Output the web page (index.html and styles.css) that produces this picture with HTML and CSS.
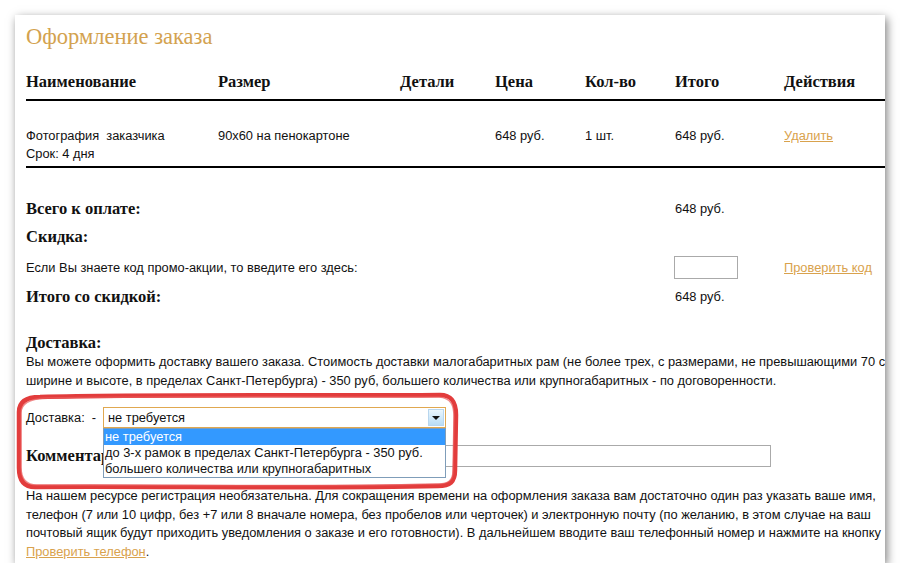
FILE: index.html
```html
<!DOCTYPE html>
<html lang="ru">
<head>
    <meta charset="UTF-8">
    <title>Оформление заказа</title>
    <link rel="stylesheet" href="styles.css">
</head>
<body>

    <div class="card">
        <h1 class="title">Оформление заказа</h1>

        <div class="order-grid order-head">
            <div>Наименование</div>
            <div>Размер</div>
            <div>Детали</div>
            <div>Цена</div>
            <div>Кол-во</div>
            <div>Итого</div>
            <div>Действия</div>
        </div>

        <div class="order-grid order-row">
            <div>Фотография&nbsp; заказчика<br>Срок: 4 дня</div>
            <div>90x60 на пенокартоне</div>
            <div></div>
            <div>648 руб.</div>
            <div>1 шт.</div>
            <div>648 руб.</div>
            <div><a href="#">Удалить</a></div>
        </div>

        <div class="order-grid sum-row sum-total">
            <div class="sum-label">Всего к оплате:</div>
            <div class="sum-value">648 руб.</div>
        </div>

        <div class="sum-row sum-gap">
            <div class="sum-label">Скидка:</div>
        </div>

        <div class="order-grid sum-row promo-row sum-gap">
            <div class="promo-text">Если Вы знаете код промо-акции, то введите его здесь:</div>
            <div><input class="promo-input" type="text"></div>
            <div><a href="#">Проверить код</a></div>
        </div>

        <div class="order-grid sum-row sum-final">
            <div class="sum-label">Итого со скидкой:</div>
            <div class="sum-value">648 руб.</div>
        </div>

        <h2 class="section-title">Доставка:</h2>
        <p class="text delivery-text">Вы можете оформить доставку вашего заказа. Стоимость доставки малогабаритных рам (не более трех, с размерами, не превышающими 70 см по<br>ширине и высоте, в пределах Санкт-Петербурга) - 350 руб, большего количества или крупногабаритных - по договоренности.</p>

        <div class="delivery-row">
            <span class="delivery-label">Доставка:&nbsp; -</span>
            <div class="select">
                <div class="select-box">
                    <span class="select-value">не требуется</span>
                    <span class="select-arrow"></span>
                </div>
                <ul class="select-list">
                    <li class="is-active">не требуется</li>
                    <li>до 3-х рамок в пределах Санкт-Петербурга - 350 руб.</li>
                    <li>большего количества или крупногабаритных</li>
                </ul>
            </div>
        </div>

        <div class="comment-row">
            <span class="comment-label">Комментарий:</span>
            <input class="comment-input" type="text">
        </div>

        <p class="text note">На нашем ресурсе регистрация необязательна. Для сокращения времени на оформления заказа вам достаточно один раз указать ваше имя,<br>телефон (7 или 10 цифр, без +7 или 8 вначале номера, без пробелов или черточек) и электронную почту (по желанию, в этом случае на ваш<br>почтовый ящик будут приходить уведомления о заказе и его готовности). В дальнейшем вводите ваш телефонный номер и нажмите на кнопку<br><a href="#">Проверить телефон</a>.</p>

        <svg class="marker" width="870" height="548" viewBox="0 0 870 548">
            <path d="M25 382 C135 379 315 381 425 380 C437 380 441 387 441 400 L440 455 C440 467 435 471 423 471 C305 474 135 471 20 472 C9 472 4 465 4 453 L4 397 C4 387 11 382 25 382 Z" fill="none" stroke="#e23c3c" stroke-width="4.5" stroke-linejoin="round"/>
            <path d="M30 383 C140 381 320 382 424 382 C436 383 439 390 439 402 L438 456 C438 466 433 469 421 469 C300 472 140 470 22 470 C11 470 6 463 6 452 L6 398 C6 389 13 384 30 383" fill="none" stroke="#ea5a5a" stroke-width="1.5" opacity="0.7"/>
        </svg>
    </div>

</body>
</html>
```

FILE: styles.css
```css
body {
    margin: 0;
    background: #fff;
    font-family: "Liberation Sans", Arial, sans-serif;
    font-size: 12.85px;
    color: #111;
}

a {
    color: #d9a24d;
}

.card {
    position: relative;
    width: 870px;
    height: 548px;
    margin: 15px 0 0 15px;
    padding: 10px 0 0 11px;
    box-sizing: border-box;
    overflow: hidden;
    background: #fff;
    box-shadow: 2px 3px 9px rgba(0, 0, 0, 0.5);
}

.title {
    margin: 0;
    font: normal 22.5px/24px "Liberation Serif", "Times New Roman", serif;
    color: #d3a24f;
}

.order-grid {
    display: grid;
    grid-template-columns: 192px 182px 95px 90px 90px 109px 1fr;
}

.order-head {
    margin-top: 24px;
    padding-bottom: 8px;
    border-bottom: 2px solid #000;
    font: bold 16.5px/18px "Liberation Serif", "Times New Roman", serif;
}

.order-row {
    padding: 26px 0 3px;
    border-bottom: 2px solid #000;
    line-height: 18px;
}

.sum-row {
    line-height: 18px;
}

.sum-label {
    grid-column: 1 / 6;
    font: bold 16.5px/18px "Liberation Serif", "Times New Roman", serif;
}

.sum-value {
    grid-column: 6;
}

.sum-total {
    margin-top: 32px;
}

.sum-gap {
    margin-top: 10px;
}

.sum-final {
    margin-top: 9px;
}

.promo-row {
    height: 23px;
    align-items: center;
}

.promo-text {
    grid-column: 1 / 6;
}

.promo-input {
    display: block;
    width: 64px;
    height: 23px;
    margin: 0 0 0 -1px;
    padding: 0;
    box-sizing: border-box;
    border: 1px solid #aaa;
}

.section-title {
    margin: 28px 0 0;
    font: bold 16.5px/18px "Liberation Serif", "Times New Roman", serif;
}

.text {
    margin: 0;
    line-height: 18.5px;
    white-space: nowrap;
}

.delivery-text {
    margin-top: 1px;
}

.delivery-row {
    display: flex;
    align-items: center;
    margin-top: 17px;
    height: 21px;
}

.delivery-label {
    width: 77px;
}

.select {
    position: relative;
    width: 343px;
}

.select-box {
    display: flex;
    align-items: center;
    height: 21px;
    box-sizing: border-box;
    border: 1px solid #e0a850;
    padding-left: 4px;
}

.select-value {
    flex: 1;
}

.select-arrow {
    position: relative;
    width: 16px;
    height: 17px;
    margin-right: 1px;
    box-sizing: border-box;
    border: 1px solid #b8d6ee;
    background: linear-gradient(#eaf6fd, #b9ddf6);
}

.select-arrow::after {
    content: "";
    position: absolute;
    left: 3px;
    top: 6px;
    border-left: 4px solid transparent;
    border-right: 4px solid transparent;
    border-top: 4px solid #111;
}

.select-list {
    position: absolute;
    top: 100%;
    left: 0;
    z-index: 2;
    width: 343px;
    margin: 0;
    padding: 0;
    box-sizing: border-box;
    list-style: none;
    border: 1px solid #7f9db9;
    background: #fff;
}

.select-list li {
    height: 16px;
    line-height: 16px;
    padding-left: 1px;
}

.select-list .is-active {
    background: #3399ff;
    color: #fff;
}

.comment-row {
    display: flex;
    align-items: center;
    margin-top: 17px;
    height: 22px;
}

.comment-label {
    width: 104px;
    font: bold 16.5px/18px "Liberation Serif", "Times New Roman", serif;
}

.comment-input {
    width: 641px;
    height: 22px;
    margin: 0;
    padding: 0;
    box-sizing: border-box;
    border: 1px solid #aaa;
}

.note {
    margin-top: 20px;
}

.marker {
    position: absolute;
    top: 0;
    left: 0;
    z-index: 3;
    pointer-events: none;
}
```
